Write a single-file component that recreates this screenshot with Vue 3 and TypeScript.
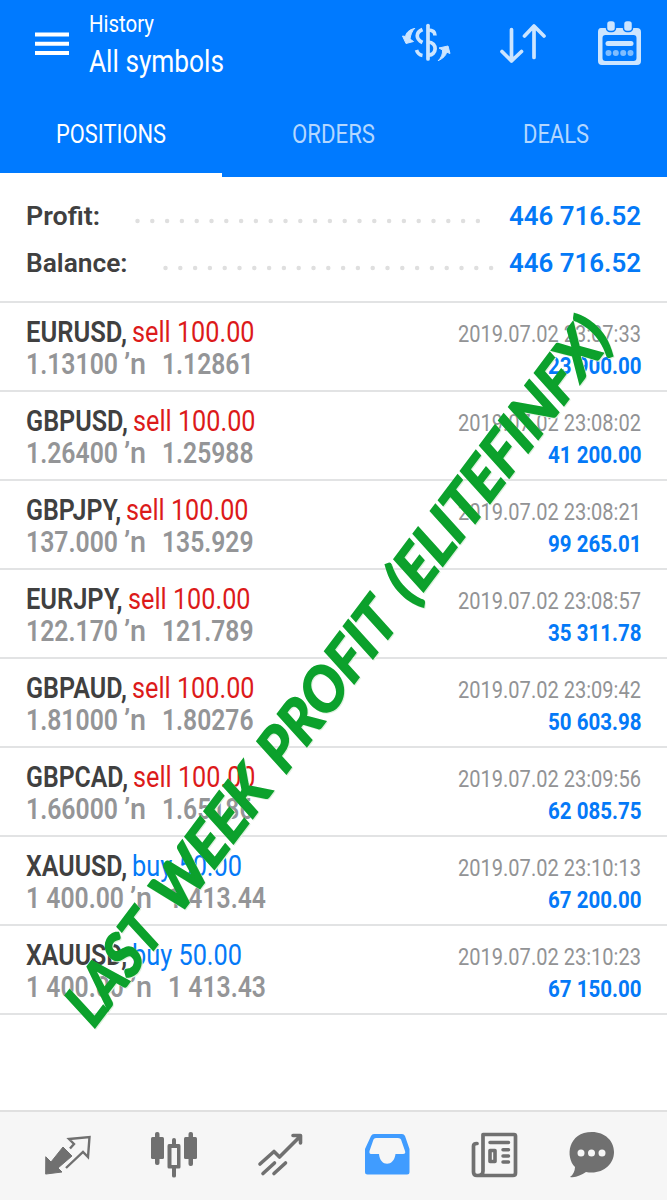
<script setup lang="ts">
import { h } from 'vue'

interface FitProps { text: string; w: number; size: number; weight?: number; base?: number }

const Fit = (p: FitProps) =>
  h('svg', { width: p.w, height: 32, style: { display: 'block', flex: 'none', overflow: 'visible' } }, [
    h('text', {
      x: 0, y: p.base ?? 26, textLength: p.w, lengthAdjust: 'spacingAndGlyphs', fill: 'currentColor',
      'font-size': p.size, 'font-weight': p.weight ?? 400,
    }, p.text),
  ])
Fit.props = ['text', 'w', 'size', 'weight', 'base']

const rows = [
  { s: 'EURUSD,', sw: 101, side: 'sell', v: 'sell 100.00', vw: 122.5, a: '1.13100', b: '1.12861', t: '2019.07.02 23:07:33', p: '23 900.00' },
  { s: 'GBPUSD,', sw: 102, side: 'sell', v: 'sell 100.00', vw: 122.5, a: '1.26400', b: '1.25988', t: '2019.07.02 23:08:02', p: '41 200.00' },
  { s: 'GBPJPY,', sw: 95, side: 'sell', v: 'sell 100.00', vw: 122.5, a: '137.000', b: '135.929', t: '2019.07.02 23:08:21', p: '99 265.01' },
  { s: 'EURJPY,', sw: 96.5, side: 'sell', v: 'sell 100.00', vw: 122.5, a: '122.170', b: '121.789', t: '2019.07.02 23:08:57', p: '35 311.78' },
  { s: 'GBPAUD,', sw: 101, side: 'sell', v: 'sell 100.00', vw: 122.5, a: '1.81000', b: '1.80276', t: '2019.07.02 23:09:42', p: '50 603.98' },
  { s: 'GBPCAD,', sw: 102, side: 'sell', v: 'sell 100.00', vw: 122.5, a: '1.66000', b: '1.65186', t: '2019.07.02 23:09:56', p: '62 085.75' },
  { s: 'XAUUSD,', sw: 101, side: 'buy', v: 'buy 50.00', vw: 110, a: '1 400.00', b: '1 413.44', t: '2019.07.02 23:10:13', p: '67 200.00' },
  { s: 'XAUUSD,', sw: 101, side: 'buy', v: 'buy 50.00', vw: 110, a: '1 400.00', b: '1 413.43', t: '2019.07.02 23:10:23', p: '67 150.00' },
]
const words = [
  { t: 'LAST', x: -4, w: 120 },
  { t: 'WEEK', x: 137, w: 159 },
  { t: 'PROFIT', x: 314, w: 193 },
  { t: '(ELITEFINFX)', x: 526, w: 334 },
]
</script>

<template>
  <div class="app">
    <header>
      <div class="bar">
        <svg class="menu" width="34" height="24"><path d="M0 2.500H34M0 11.700H34M0 20.900H34" stroke="#fff" stroke-width="4" /></svg>
        <div class="title">
          <Fit text="History" :w="65" :size="24" :base="25" />
          <Fit text="All symbols" :w="135" :size="32" :base="33" />
        </div>
        <svg class="tools" width="260" height="60" fill="none" stroke="#cce5ff" stroke-linecap="round" stroke-linejoin="round">
          <g stroke-width="3.7">
            <path d="M28 17.500V51" />
            <path d="M28 22C32 22 35 23.500 35 27.500M28 34C38 34 37 48 28 47M22.500 21.500C15.500 24.500 15.500 31 22.500 34.500M16.500 42C17.500 45 19.500 47 22.500 47.500" stroke-linecap="butt" />
          </g>
          <path d="M14.500 20.500C9 21.500 6 25 5.500 28.500L2.500 28L6 35.500L13.500 33.500L10 31C10.500 27 12 23 14.500 20.500ZM38.500 52.500C43 50.500 46.500 47 46.500 44L50 45.500L48 38L39 40L42.500 42C43 46 41 50 38.500 52.500Z" fill="#cce5ff" stroke-width="1" />
          <g stroke-width="3.7" transform="translate(99 0)">
            <path d="M12.500 21.500V53M3 43.500L12.500 53L22.500 43.500M35 49.500V18M25.500 28L35 18L45 28" />
          </g>
          <g stroke="none">
            <path fill-rule="evenodd" d="M201 20H237Q241 20 241 24V53Q241 57 237 57H202Q198 57 198 53V24Q198 20 201 20ZM205.500 27Q202.500 27 202.500 30V50Q202.500 53 205.500 53H233.500Q236.500 53 236.500 50V30Q236.500 27 233.500 27Z" fill="#cce5ff" />
            <rect x="206.500" y="12.500" width="9" height="11" rx="3.500" fill="#cce5ff" stroke="#007aff" stroke-width="1.500" />
            <rect x="223.500" y="12.500" width="9" height="11" rx="3.500" fill="#cce5ff" stroke="#007aff" stroke-width="1.500" />
            <rect x="205.500" y="33" width="28" height="5" rx="2.500" fill="#cce5ff" />
            <path d="M208.500 45h.01M215.800 45h.01M223.200 45h.01M230.500 45h.01" stroke="#80bdff" stroke-width="6" />
          </g>
        </svg>
      </div>
      <nav class="tabs">
        <div class="tab on"><Fit text="POSITIONS" :w="110" :size="26" /></div>
        <div class="tab"><Fit text="ORDERS" :w="83" :size="26" /></div>
        <div class="tab"><Fit text="DEALS" :w="66" :size="26" /></div>
      </nav>
    </header>

    <section class="summary">
      <div class="sum">
        <Fit text="Profit:" :w="74" :size="26" :weight="600" />
        <svg class="dots first" width="348" height="8"><path d="M2.500 4H347" /></svg>
        <Fit class="blue" text="446 716.52" :w="132" :size="26" :weight="600" />
      </div>
      <div class="sum">
        <Fit text="Balance:" :w="101.500" :size="26" :weight="600" />
        <svg class="dots second" width="332" height="8"><path d="M2.500 4H330" /></svg>
        <Fit class="blue" text="446 716.52" :w="132" :size="26" :weight="600" />
      </div>
    </section>

    <article v-for="r in rows" :key="r.t" class="row">
      <div class="line">
        <Fit :text="r.s" :w="r.sw" :size="30" :weight="600" />
        <Fit class="vol" :class="r.side" :text="r.v" :w="r.vw" :size="30" />
        <Fit class="time" :text="r.t" :w="183" :size="24" />
      </div>
      <div class="line gray">
        <Fit :text="r.a" :w="r.side === 'buy' ? 98 : 92" :size="29" :weight="600" />
        <Fit class="tick" text="’n" :w="22" :size="30" :weight="500" />
        <Fit class="to" :text="r.b" :w="r.side === 'buy' ? 98 : 91.500" :size="29" :weight="600" />
        <Fit class="gain" :text="r.p" :w="93.500" :size="23.500" :weight="700" />
      </div>
    </article>

    <footer>
      <svg width="667" height="89" fill="none" stroke="#707070" stroke-linecap="round" stroke-linejoin="round">
        <path d="M46 46L51 51L63 36L72 45L58 57L62 61L46 63Z" fill="#707070" stroke-width="1" stroke-linejoin="miter" />
        <path d="M66 57L83 41L88 46L89.500 26L69 28L74 33L70 37.500" stroke-width="2.400" stroke-linecap="butt" stroke-linejoin="miter" />
        <g fill="#707070" stroke="none">
          <rect x="151" y="26" width="13" height="22" rx="1.500" /><rect x="155" y="21" width="4.500" height="33" rx="2" />
          <rect x="184" y="26" width="13" height="22" rx="1.500" /><rect x="188.500" y="21" width="4.500" height="34" rx="2" />
          <path d="M172 33V29Q172 27 174 27Q176 27 176 29V33H179Q180.500 33 180.500 35V56Q180.500 57.500 179 57.500H176V65Q176 66.500 174 66.500Q172 66.500 172 65V57.500H169Q167.500 57.500 167.500 56V35Q167.500 33 169 33ZM171.500 37V54H177V37Z" fill-rule="evenodd" />
        </g>
        <path d="M260 53L274 40.500L279.500 46L300 25.500M293 24.500H300.500V32M263 62.500L274.500 52M274 62.500L285.500 52" stroke-width="3.600" />
        <path d="M374 23H402Q404 23 405 25L409.500 38V61Q409.500 63.500 407 63.500H367.500Q365 63.500 365 61V38L371 25Q372 23 374 23ZM376 27Q374 27 373.500 28.500L369.500 40Q369 43 371 43H379C380 56 394 56 395.500 43H403Q406 43 405 40L401 28.500Q400.500 27 398 27Z" fill="#409cff" fill-rule="evenodd" stroke="none" />
        <path d="M483 23.500H514Q515.500 23.500 515.500 25V62Q515.500 64.500 513 64.500H477Q473.500 64.500 473.500 61V35Q473.500 32.500 477 32.500M483 23.500V60Q483 64.500 478 64.500" stroke-width="3.700" />
        <path d="M490 31.500H508.500M503 38.700H508.500M503 45H508.500M503 51H508.500" stroke-width="3.500" />
        <path d="M490 39.500H495V50.500H490Z" stroke-width="3.600" />
        <path d="M592 21C605 21 614 30 614 41C614 54 602 64 586 61C581 64 576 67 570 66C573 64 575 60 575 56C565 46 568 21 592 21Z" fill="#707070" stroke="none" />
        <path d="M581 42h.01M591.500 42h.01M602 42h.01" stroke="#f6f6f6" stroke-width="7" />
      </svg>
    </footer>

    <svg class="mark" width="667" height="1200">
      <g transform="translate(96 1026) rotate(-53) skewX(-4)">
        <text v-for="w in words" :key="w.t" :x="w.x" y="0" :textLength="w.w" lengthAdjust="spacingAndGlyphs">{{ w.t }}</text>
      </g>
    </svg>
  </div>
</template>

<style>
body { margin: 0; background: #fff; }
</style>
<style scoped>
.app { position: relative; width: 667px; height: 1200px; overflow: hidden; display: flex; flex-direction: column; background: #fff; color: #404040; font-family: Roboto, "Liberation Sans", sans-serif; }
header { height: 177px; flex: none; background: #007aff; color: #fff; }
.bar { height: 88px; display: flex; }
.menu { margin: 32px 20px 0 35px; }
.title { display: flex; flex-direction: column; padding-top: 7px; width: 290px; }
.tools { margin: 8px 0 0 21px; }
.tabs { display: grid; grid-template-columns: 222px 223px 222px; height: 89px; }
.tab { display: flex; justify-content: center; padding-top: 29px; color: #b3d7ff; height: 56px; }
.tab.on { color: #fff; border-bottom: 4px solid #fff; }
.summary { border-bottom: 2px solid #e2e3e4; box-sizing: border-box; height: 126px; padding: 22px 26px 0; flex: none; }
.sum { display: flex; height: 46.500px; }
.dots { margin-top: 18px; fill: none; stroke: #dfdfdf; stroke-width: 4.500; stroke-linecap: round; stroke-dasharray: 0 14.800; }
.first { margin-left: 35px; }
.second { margin-left: 35.500px; }
.blue { margin-left: auto; color: #0479f7; }
.row { height: 89px; box-sizing: border-box; border-bottom: 2px solid #e2e3e4; padding: 13px 26px 0; flex: none; }
.line { display: flex; height: 31.500px; }
.vol { margin-left: 5px; }
.sell { color: #dc1a1a; }
.buy { color: #0479f7; }
.time { margin-left: auto; color: #929395; }
.gray { color: #949597; }
.tick { margin-left: 6px; }
.to { margin-left: 16px; }
.gain { margin-left: auto; color: #0479f7; }
footer { margin-top: auto; height: 88px; border-top: 2px solid #e0e0e0; background: #f6f6f6; }
footer svg { display: block; margin-top: -1px; }
.mark { position: absolute; left: 0; top: 0; pointer-events: none; filter: drop-shadow(1px 1px 0 #def0de); }
.mark text { font: italic 700 59px Lato, sans-serif; fill: #0ca12c; stroke: #0ca12c; stroke-width: 2; }
</style>
